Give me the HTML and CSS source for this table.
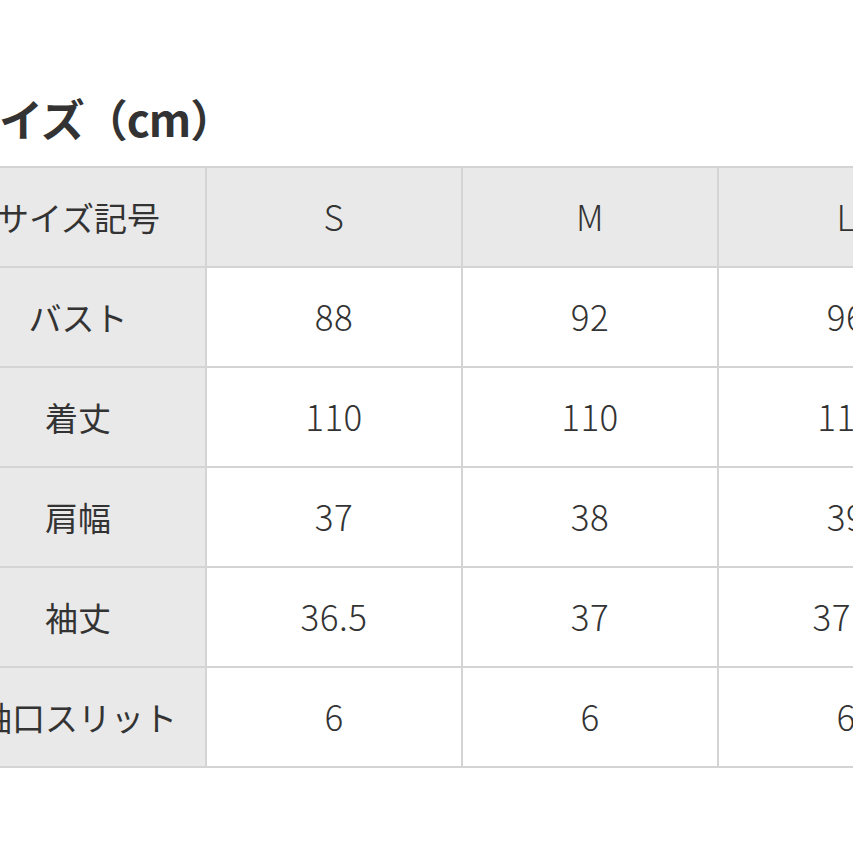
FILE: index.html
```html
<!DOCTYPE html>
<html lang="ja">
<head>
<meta charset="utf-8">
<link rel="stylesheet" href="styles.css">
</head>
<body>
<div class="page">
  <h2 class="title">サイズ（cm）</h2>
  <table class="size-table">
    <tr class="head">
      <th class="label">サイズ記号</th><th>S</th><th>M</th><th>L</th>
    </tr>
    <tr><th class="label">バスト</th><td>88</td><td>92</td><td>96</td></tr>
    <tr><th class="label">着丈</th><td>110</td><td>110</td><td>110</td></tr>
    <tr><th class="label">肩幅</th><td>37</td><td>38</td><td>39</td></tr>
    <tr><th class="label">袖丈</th><td>36.5</td><td>37</td><td>37.5</td></tr>
    <tr><th class="label">袖口スリット</th><td>6</td><td>6</td><td>6</td></tr>
  </table>
</div>
</body>
</html>
```
FILE: styles.css
```css
html, body {
  margin: 0;
  padding: 0;
  background: #ffffff;
  overflow: hidden;
  width: 853px;
  height: 853px;
}
.page {
  margin-left: -51px;
  padding-top: 92px;
  font-family: "Noto Sans CJK JP", "Noto Sans", sans-serif;
  color: #333333;
}
.title {
  margin: 0 0 0 7px;
  font-size: 44px;
  line-height: 52px;
  height: 74px;
  font-weight: 700;
  color: #333333;
  white-space: nowrap;
  letter-spacing: -1px;
}
.size-table {
  border-collapse: collapse;
  table-layout: fixed;
  width: 1024px;
}
.size-table th,
.size-table td {
  width: 254px;
  height: 98px;
  padding: 0;
  border: 2px solid #d4d4d4;
  text-align: center;
  vertical-align: middle;
  font-size: 33px;
  font-weight: 400;
  white-space: nowrap;
  color: #333333;
}
.size-table td,
.size-table .head th:not(.label) {
  font-family: "Noto Sans CJK JP", sans-serif;
  font-size: 35px;
  font-weight: 300;
  letter-spacing: 0.5px;
  height: 95px;
  padding-bottom: 3px;
}
.size-table .head th {
  background: #e9e9e9;
}
.size-table th.label {
  background: #e9e9e9;
  font-weight: 400;
}
```
